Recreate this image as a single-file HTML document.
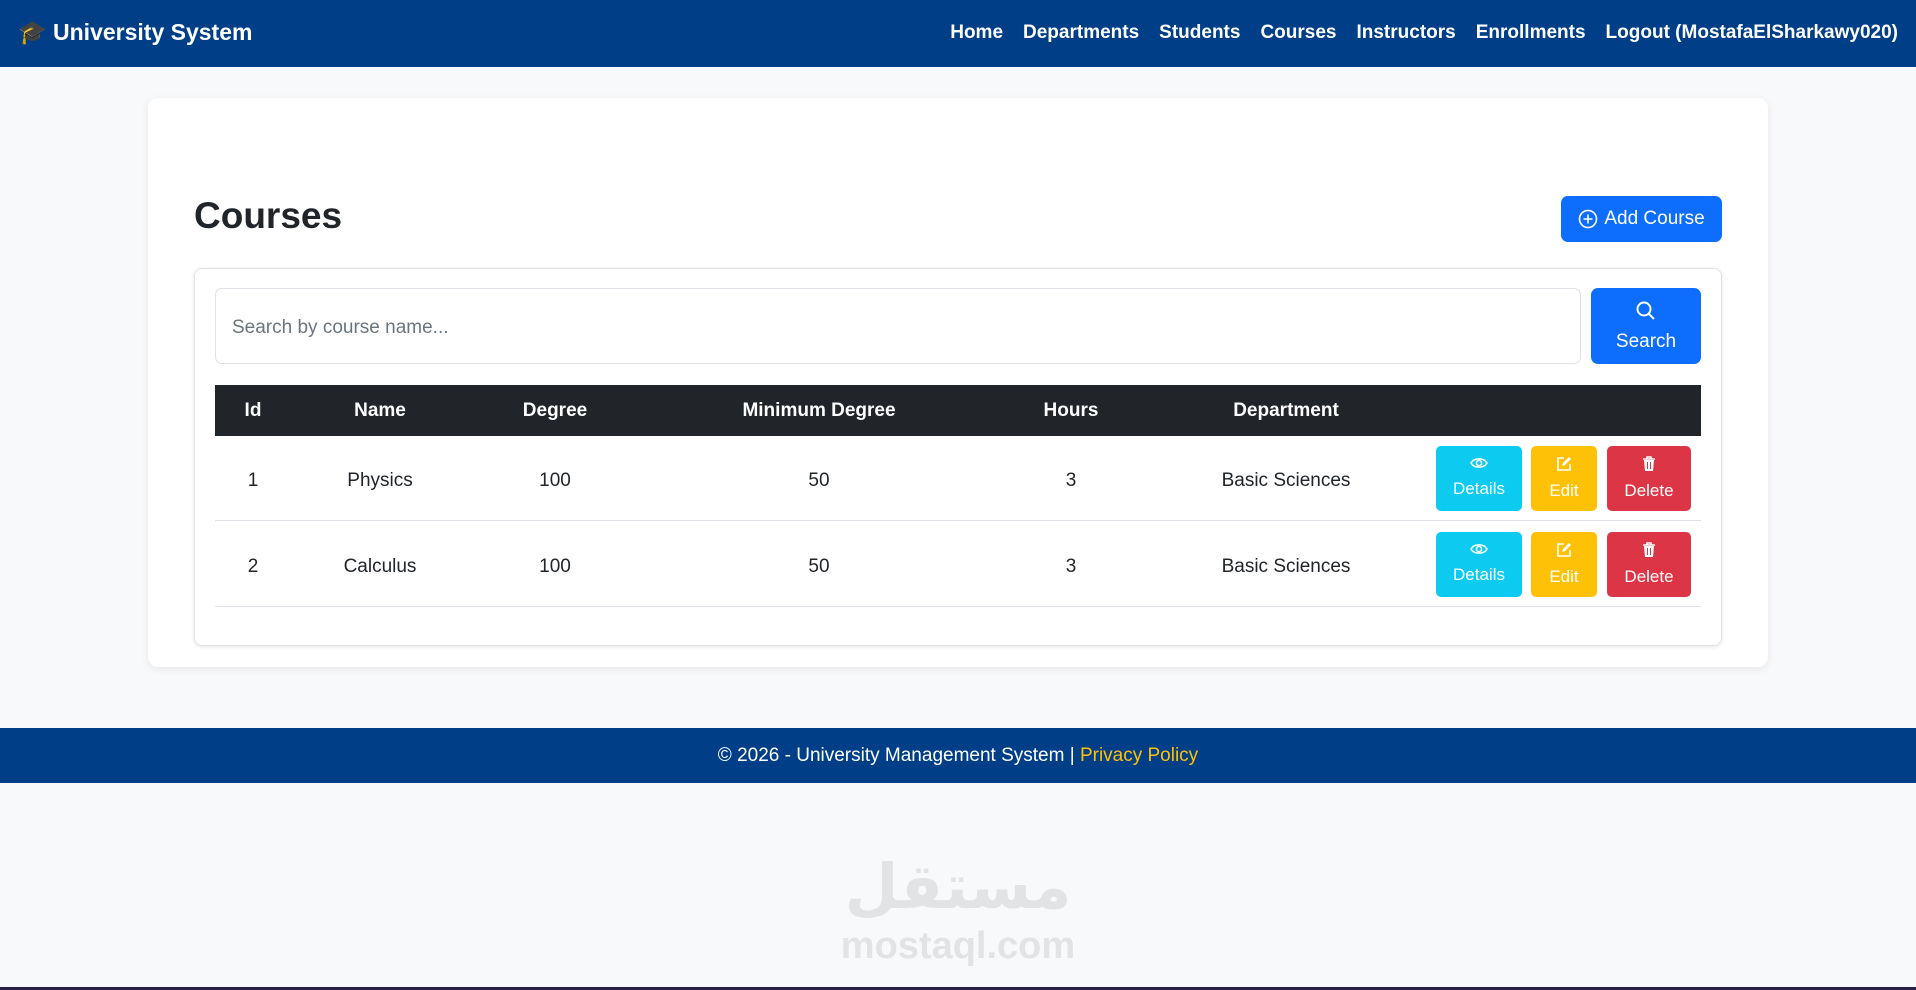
<!DOCTYPE html>
<html><head><meta charset="utf-8"><style>
*{box-sizing:border-box;margin:0;padding:0}
body{width:1916px;height:990px;background:#f8f9fa;font-family:"Liberation Sans",sans-serif;color:#212529;position:relative;overflow:hidden}
.nav{position:absolute;left:0;top:0;width:1916px;height:67px;background:#003f87;color:#fff}
.brand{position:absolute;left:18px;top:19px;font-size:23px;font-weight:bold}
.links{position:absolute;right:18px;top:22px;font-size:19px;font-weight:bold;display:flex;gap:20px}
.card{position:absolute;left:148px;top:98px;width:1620px;height:569px;background:#fff;border-radius:10px;box-shadow:0 2px 8px rgba(0,0,0,.08)}
h1{position:absolute;left:194px;top:195px;font-size:37px;font-weight:bold}
.add{position:absolute;left:1561px;top:196px;width:161px;height:46px;background:#0d6efd;color:#fff;border-radius:7px;font-size:19px;display:flex;align-items:center;justify-content:center;gap:6px}
.inner{position:absolute;left:194px;top:268px;width:1528px;height:378px;border:1px solid #dee2e6;border-radius:8px;box-shadow:0 1px 4px rgba(0,0,0,.1)}
.inp{position:absolute;left:215px;top:288px;width:1366px;height:76px;border:1px solid #dee2e6;border-radius:7px;font-size:19px;color:#6c757d;padding:28px 16px}
.sbtn{position:absolute;left:1591px;top:288px;width:110px;height:76px;background:#0d6efd;border-radius:7px;color:#fff;font-size:19px;text-align:center;padding-top:12px}
.th{position:absolute;left:215px;top:385px;width:1486px;height:51px;background:#212529;color:#fff;font-weight:bold;font-size:19px}
.c{position:absolute;transform:translateX(-50%);white-space:nowrap}
.row{position:absolute;left:215px;width:1486px;height:85px;border-bottom:1px solid #dee2e6;font-size:19px}
.b{position:absolute;top:10px;height:65px;border-radius:5px;color:#fff;font-size:17px;text-align:center;padding-top:10px;line-height:1}
.b svg{display:block;margin:0 auto 10px}
.foot{position:absolute;left:0;top:728px;width:1916px;height:55px;background:#003f87;color:#fff;font-size:19px;text-align:center;line-height:55px}
.wm{position:absolute;left:0;width:1916px;text-align:center;color:#e2e3e5;font-weight:bold}
</style></head><body>
<div class="nav"><div class="brand">🎓 University System</div>
<div class="links"><span>Home</span><span>Departments</span><span>Students</span><span>Courses</span><span>Instructors</span><span>Enrollments</span><span>Logout (MostafaElSharkawy020)</span></div></div>
<div class="card"></div>
<h1>Courses</h1>
<div class="add"><svg width="20" height="20" viewBox="0 0 20 20"><circle cx="10" cy="10" r="8.5" fill="none" stroke="#fff" stroke-width="1.6"/><path d="M10 5.5v9M5.5 10h9" stroke="#fff" stroke-width="1.6"/></svg>Add Course</div>
<div class="inner"></div>
<div class="inp">Search by course name...</div>
<div class="sbtn"><svg width="22" height="22" viewBox="0 0 22 22"><circle cx="9" cy="9" r="6.5" fill="none" stroke="#fff" stroke-width="2"/><path d="M14 14l5 5" stroke="#fff" stroke-width="2"/></svg><div style="margin-top:3px">Search</div></div>
<div class="th"><span class="c" style="left:38px;top:15px">Id</span><span class="c" style="left:165px;top:15px">Name</span><span class="c" style="left:340px;top:15px">Degree</span><span class="c" style="left:604px;top:15px">Minimum Degree</span><span class="c" style="left:856px;top:15px">Hours</span><span class="c" style="left:1071px;top:15px">Department</span></div>
<div class="row" style="top:436px">
<span class="c" style="left:38px;top:34px">1</span><span class="c" style="left:165px;top:34px">Physics</span><span class="c" style="left:340px;top:34px">100</span><span class="c" style="left:604px;top:34px">50</span><span class="c" style="left:856px;top:34px">3</span><span class="c" style="left:1071px;top:34px">Basic Sciences</span>
<div class="b" style="left:1221px;width:86px;background:#0dcaf0"><svg width="18" height="14" viewBox="0 0 18 14"><path d="M1 7C4 1.5 14 1.5 17 7C14 12.5 4 12.5 1 7Z" fill="none" stroke="#fff" stroke-width="1.5"/><circle cx="9" cy="7" r="2.6" fill="none" stroke="#fff" stroke-width="1.5"/></svg>Details</div>
<div class="b" style="left:1316px;width:66px;background:#ffc107"><svg width="16" height="16" viewBox="0 0 16 16"><path d="M8 2H2v12h12V8" fill="none" stroke="#fff" stroke-width="1.6"/><path d="M6 10l1-3 6-6 2 2-6 6z" fill="#fff"/></svg>Edit</div>
<div class="b" style="left:1392px;width:84px;background:#dc3545"><svg width="16" height="16" viewBox="0 0 16 16"><path d="M2 3h12M6 3V1h4v2" fill="none" stroke="#fff" stroke-width="1.6"/><path d="M3 4h10l-1 11H4z" fill="#fff"/><path d="M6.5 6v7M9.5 6v7" stroke="#dc3545" stroke-width="1"/></svg>Delete</div></div>
<div class="row" style="top:522px">
<span class="c" style="left:38px;top:34px">2</span><span class="c" style="left:165px;top:34px">Calculus</span><span class="c" style="left:340px;top:34px">100</span><span class="c" style="left:604px;top:34px">50</span><span class="c" style="left:856px;top:34px">3</span><span class="c" style="left:1071px;top:34px">Basic Sciences</span>
<div class="b" style="left:1221px;width:86px;background:#0dcaf0"><svg width="18" height="14" viewBox="0 0 18 14"><path d="M1 7C4 1.5 14 1.5 17 7C14 12.5 4 12.5 1 7Z" fill="none" stroke="#fff" stroke-width="1.5"/><circle cx="9" cy="7" r="2.6" fill="none" stroke="#fff" stroke-width="1.5"/></svg>Details</div>
<div class="b" style="left:1316px;width:66px;background:#ffc107"><svg width="16" height="16" viewBox="0 0 16 16"><path d="M8 2H2v12h12V8" fill="none" stroke="#fff" stroke-width="1.6"/><path d="M6 10l1-3 6-6 2 2-6 6z" fill="#fff"/></svg>Edit</div>
<div class="b" style="left:1392px;width:84px;background:#dc3545"><svg width="16" height="16" viewBox="0 0 16 16"><path d="M2 3h12M6 3V1h4v2" fill="none" stroke="#fff" stroke-width="1.6"/><path d="M3 4h10l-1 11H4z" fill="#fff"/><path d="M6.5 6v7M9.5 6v7" stroke="#dc3545" stroke-width="1"/></svg>Delete</div></div>
<div class="foot">© 2026 - University Management System | <span style="color:#ffc107">Privacy Policy</span></div>
<div class="wm" style="top:850px;font-size:62px;font-family:'DejaVu Sans',sans-serif">مستقل</div>
<div class="wm" style="top:925px;font-size:38px">mostaql.com</div>
<div style="position:absolute;left:0;top:987px;width:1916px;height:3px;background:#2a1f4a"></div>
</body></html>
